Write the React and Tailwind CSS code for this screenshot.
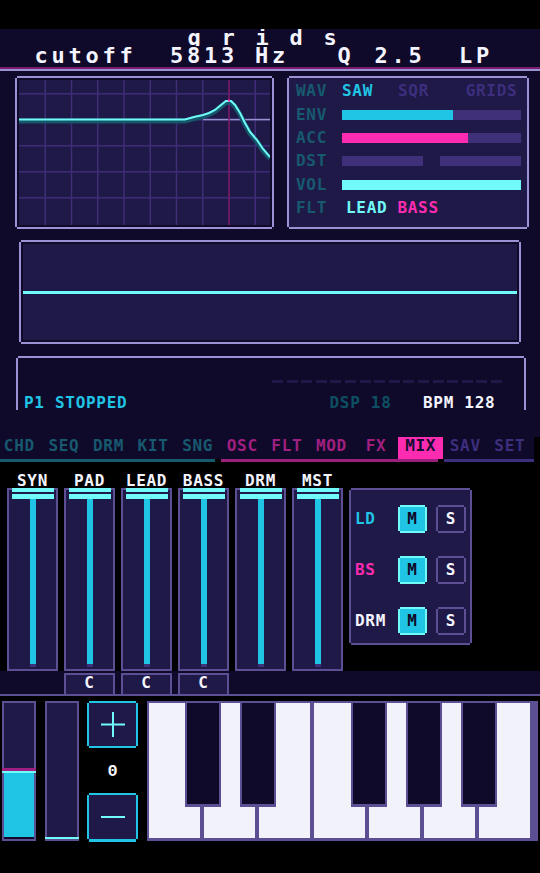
import React from "react";

const TABS = [
  ["CHD", "text-[#17596f]"],
  ["SEQ", "text-[#17596f]"],
  ["DRM", "text-[#17596f]"],
  ["KIT", "text-[#17596f]"],
  ["SNG", "text-[#17596f]"],
  ["OSC", "text-[#a01f80]"],
  ["FLT", "text-[#a01f80]"],
  ["MOD", "text-[#a01f80]"],
  ["FX", "text-[#a01f80]"],
  ["MIX", "bg-[#ff2bb1] text-[#140c33]"],
  ["SAV", "text-[#3d2e7e]"],
  ["SET", "text-[#3d2e7e]"],
];

const CHANNELS = [
  ["SYN", false],
  ["PAD", true],
  ["LEAD", true],
  ["BASS", true],
  ["DRM", false],
  ["MST", false],
];

const BLACK_KEYS = [38, 93, 204, 259, 314];

// filter response curve, plot coordinates
const CURVE =
  "0,39.5 166,39.5 175,37 184,35 190,33 196,30 202,25 207,21 212,21 216,25 221,33 226,43 231,52 238,60 244,69 251,77";

function FilterPlot() {
  return (
    <svg width="251" height="145" className="block bg-[#1f1947]">
      {[1, 2, 3, 4, 5, 6, 7, 8, 9].map((i) => (
        <rect key={"v" + i} x={i * 26.25 - 0.75} y="0" width="1.5" height="145" fill="#3f2d78" />
      ))}
      {[0, 1, 2, 3, 4].map((j) => (
        <rect key={"h" + j} x="0" y={13.8 + 26 * j - 0.75} width="251" height="1.5" fill="#3f2d78" />
      ))}
      <rect x="184" y="38.8" width="67" height="1.5" fill="#9b92d6" />
      <rect x="209.25" y="0" width="1.5" height="145" fill="#7a1660" />
      <polyline points={CURVE} fill="none" stroke="#14566a" strokeWidth="5" transform="translate(0,1.5)" />
      <polyline points={CURVE} fill="none" stroke="#70fbf8" strokeWidth="2" />
      <rect x="209" y="19.5" width="2" height="2" fill="#ff2bb1" />
    </svg>
  );
}

function ParamRow({ label, children }) {
  return (
    <div className="flex items-center h-[23.4px]">
      <span className="w-[46px] text-[#17596f]">{label}</span>
      {children}
    </div>
  );
}

function Fader({ label }) {
  return (
    <div className="w-[51px] flex flex-col">
      <div className="h-[15px] text-center text-[#f4f4ff]">{label}</div>
      <div className="h-[183px] border-2 border-[#5c4f94] bg-[#1f1947] flex flex-col items-center">
        <div className="-mt-[2px] w-[42px] flex flex-col">
          <div className="h-[4px] bg-[#70fbf8]" />
          <div className="h-[2px] bg-[#1f1947]" />
          <div className="h-[5px] bg-[#70fbf8]" />
        </div>
        <div className="w-[6px] h-[165px] bg-[#20c4e4]" />
        <div className="w-[6px] h-[3px] bg-[#40307a]" />
      </div>
    </div>
  );
}

function MuteRow({ label, color }) {
  return (
    <div className="flex items-center h-[28px] pl-[4px]">
      <span className={"w-[45px] " + color}>{label}</span>
      <div className="w-[25px] h-[24px] bg-[#20c4e4] text-[#0f0a29] flex items-center justify-center shadow-[0_-2px_0_0_#70fbf8,0_2px_0_0_#70fbf8,-2px_0_0_0_#70fbf8,2px_0_0_0_#70fbf8]">
        M
      </div>
      <div className="ml-[13px] w-[26px] h-[24px] bg-[#1f1947] text-[#f4f4ff] flex items-center justify-center shadow-[0_-2px_0_0_#5c4f94,0_2px_0_0_#5c4f94,-2px_0_0_0_#5c4f94,2px_0_0_0_#5c4f94]">
        S
      </div>
    </div>
  );
}

export default function App() {
  return (
    <div className="w-[540px] h-[873px] overflow-hidden bg-black font-['DejaVu_Sans_Mono',monospace] font-bold text-[16px] leading-[16px] tracking-[0.7px]">
      <div className="h-[29px]" />

      <header className="h-[38px] bg-[#0f0a29] text-[22px] text-[#f4f4ff] tracking-[3.75px]">
        <div className="h-[17px] overflow-hidden leading-[17px] pl-[187.5px] whitespace-pre">g r i d s</div>
        <div className="flex h-[19px] leading-[19px] whitespace-pre">
          <span className="w-[170px] pl-[34.5px]">cutoff</span>
          <span className="w-[85px]">5813</span>
          <span className="w-[82.5px]">Hz</span>
          <span className="w-[37px]">Q</span>
          <span className="w-[84.5px]">2.5</span>
          <span>LP</span>
        </div>
      </header>
      <div className="h-[2px] bg-[#7a1d6a]" />
      <div className="h-[2px] bg-[#9b92d6]" />

      <main className="h-[388px] bg-[#0f0a29]">
        <div className="flex pt-[7px] pl-[17px] gap-[17px]">
          <div className="w-[255px] h-[149px] p-[2px] shadow-[0_-2px_0_0_#9b92d6,0_2px_0_0_#9b92d6,-2px_0_0_0_#9b92d6,2px_0_0_0_#9b92d6]">
            <FilterPlot />
          </div>

          <div className="w-[238px] h-[149px] bg-[#1f1947] pt-[1.5px] pl-[7px] shadow-[0_-2px_0_0_#9b92d6,0_2px_0_0_#9b92d6,-2px_0_0_0_#9b92d6,2px_0_0_0_#9b92d6]">
            <ParamRow label="WAV">
              <span className="w-[56px] text-[#20c4e4]">SAW</span>
              <span className="w-[67.7px] text-[#3d2e7e]">SQR</span>
              <span className="text-[#3d2e7e]">GRIDS</span>
            </ParamRow>
            <ParamRow label="ENV">
              <div className="w-[179px] h-[10px] bg-[#40307a]">
                <div className="w-[111px] h-full bg-[#20c4e4]" />
              </div>
            </ParamRow>
            <ParamRow label="ACC">
              <div className="w-[179px] h-[10px] bg-[#40307a]">
                <div className="w-[126px] h-full bg-[#ff2bb1]" />
              </div>
            </ParamRow>
            <ParamRow label="DST">
              <div className="w-[81px] h-[10px] bg-[#40307a]" />
              <div className="ml-[17px] w-[81px] h-[10px] bg-[#40307a]" />
            </ParamRow>
            <ParamRow label="VOL">
              <div className="w-[179px] h-[10px] bg-[#70fbf8]" />
            </ParamRow>
            <ParamRow label="FLT">
              <span className="ml-[4px] w-[51.4px] text-[#70fbf8]">LEAD</span>
              <span className="text-[#ff2bb1]">BASS</span>
            </ParamRow>
          </div>
        </div>

        <div className="mt-[15px] ml-[21px] w-[498px] h-[100px] p-[2px] shadow-[0_-2px_0_0_#9b92d6,0_2px_0_0_#9b92d6,-2px_0_0_0_#9b92d6,2px_0_0_0_#9b92d6]">
          <div className="h-full bg-[#1f1947] flex items-center">
            <div className="w-full h-[3px] bg-[#70fbf8]" />
          </div>
        </div>

        <div className="mt-[16px] ml-[17.5px] w-[506px] h-[52px] shadow-[0_-2px_0_0_#9b92d6,-2px_0_0_0_#9b92d6,2px_0_0_0_#9b92d6]">
          <div className="flex pt-[22px] pl-[254.5px] gap-[3.6px]">
            {Array.from({ length: 16 }).map((_, i) => (
              <div key={i} className="w-[11px] h-[3px] bg-[#1f1947]" />
            ))}
          </div>
          <div className="flex mt-[12px] pl-[6.5px] whitespace-pre">
            <span className="w-[305.5px] text-[#20c4e4]">P1 STOPPED</span>
            <span className="w-[93.5px] text-[#0d4f63]">DSP 18</span>
            <span className="text-[#f4f4ff]">BPM 128</span>
          </div>
        </div>

        <div className="mt-[27px] flex h-[22px]">
          <div className="w-[534px] overflow-hidden">
            <div className="flex -ml-[3px]">
              {TABS.map(([t, cls]) => (
                <div key={t} className={"w-[44.6px] shrink-0 h-[22px] leading-[18px] text-center " + cls}>
                  {t}
                </div>
              ))}
            </div>
          </div>
          <div className="flex-1 bg-black" />
        </div>
      </main>

      <div className="flex h-[3px]">
        <div className="w-[215px] bg-[#165a70]" />
        <div className="ml-[6px] w-[217px] bg-[#9c1f7c]" />
        <div className="ml-[6px] w-[90px] bg-[#3d2e7e]" />
      </div>

      {/* mixer */}
      <div className="h-[209px] pt-[11px] pl-[7px] flex items-start">
        <div className="flex gap-[6px]">
          {CHANNELS.map(([name]) => (
            <Fader key={name} label={name} />
          ))}
        </div>
        <div className="ml-[8px] mt-[17px] w-[119px] h-[153px] bg-[#1f1947] pt-[15px] flex flex-col gap-[23px] shadow-[0_-2px_0_0_#5c4f94,0_2px_0_0_#5c4f94,-2px_0_0_0_#5c4f94,2px_0_0_0_#5c4f94]">
          <MuteRow label="LD" color="text-[#20c4e4]" />
          <MuteRow label="BS" color="text-[#ff2bb1]" />
          <MuteRow label="DRM" color="text-[#f4f4ff]" />
        </div>
      </div>

      <div className="h-[23px] bg-[#0f0a29] pt-[2px] pl-[7px] flex gap-[6px]">
        {CHANNELS.map(([name, hasC]) =>
          hasC ? (
            <div key={name} className="w-[51px] h-[21px] border-t-2 border-x-2 border-[#5c4f94] bg-[#1f1947] text-center text-[#f4f4ff]">
              C
            </div>
          ) : (
            <div key={name} className="w-[51px]" />
          )
        )}
      </div>
      <div className="h-[2px] bg-[#5c4f94]" />

      {/* meters, octave and keys */}
      <div className="flex pt-[5px] pl-[2px]">
        <div className="w-[34px] h-[140px] border-2 border-[#5c4f94] bg-[#1f1947] flex flex-col">
          <div className="flex-1" />
          <div className="h-[3px] -mx-[2px] bg-[#a01f80]" />
          <div className="h-[2px] -mx-[2px] bg-[#70fbf8]" />
          <div className="h-[64px] bg-[#20c4e4]" />
          <div className="h-[2px] bg-[#0f0a29]" />
        </div>
        <div className="ml-[9px] w-[34px] h-[140px] border-2 border-[#5c4f94] bg-[#1f1947] flex flex-col justify-end">
          <div className="h-[2px] -mx-[2px] bg-[#70fbf8]" />
        </div>

        <div className="ml-[8px] w-[51px] h-[140px] p-[2px] flex flex-col items-center">
          <div className="w-[47px] h-[43px] bg-[#1f1947] flex items-center justify-center shadow-[0_-2px_0_0_#20c4e4,0_2px_0_0_#20c4e4,-2px_0_0_0_#20c4e4,2px_0_0_0_#20c4e4]">
            <svg width="24" height="25" viewBox="0 0 24 25">
              <rect x="0" y="11.5" width="24" height="2" fill="#70fbf8" />
              <rect x="11" y="0" width="2" height="25" fill="#70fbf8" />
            </svg>
          </div>
          <div className="flex-1 flex items-center justify-center pt-[3px] text-[#f4f4ff] font-['Liberation_Mono',monospace] text-[17px] tracking-normal">
            0
          </div>
          <div className="w-[47px] h-[44px] bg-[#1f1947] flex items-center justify-center shadow-[0_-2px_0_0_#20c4e4,0_3px_0_0_#20c4e4,-2px_0_0_0_#20c4e4,2px_0_0_0_#20c4e4]">
            <svg width="24" height="2" viewBox="0 0 24 2">
              <rect x="0" y="0" width="24" height="2" fill="#70fbf8" />
            </svg>
          </div>
        </div>

        <div className="relative ml-[9px] w-[391px] h-[140px] bg-[#5c4f94] pt-[2px] pl-[2px]">
          <div className="flex gap-[4px]">
            {Array.from({ length: 7 }).map((_, i) => (
              <div key={i} className="w-[51px] h-[135px] bg-[#f2f2fb]" />
            ))}
          </div>
          {BLACK_KEYS.map((left) => (
            <div
              key={left}
              className="absolute top-[2px] w-[36px] h-[104px] border-x-2 border-b-[3px] border-[#5c4f94] bg-[#0f0a29]"
              style={{ left }}
            />
          ))}
        </div>
      </div>
    </div>
  );
}
